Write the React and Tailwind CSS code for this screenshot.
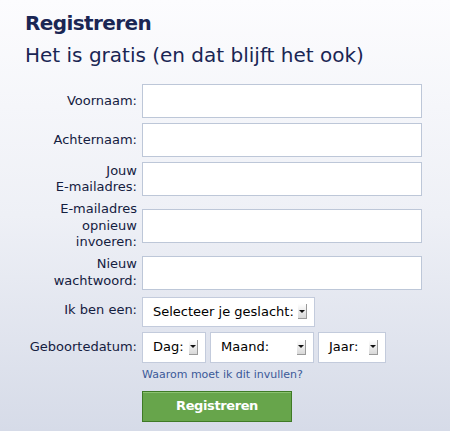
const font = { fontFamily: '"DejaVu Sans", "Lucida Grande", Verdana, sans-serif' };

function Arrow() {
    return (
        <span className="flex h-[15px] w-[9px] items-center justify-center border-r border-b border-[#9a9a9a] bg-gradient-to-b from-[#ffffff] to-[#d8d8d8]">
            <span className="h-0 w-0 border-x-[3px] border-t-[3px] border-x-transparent border-t-[#111]" />
        </span>
    );
}

function Select({ label, width }) {
    return (
        <div className={`flex h-full items-center justify-between border border-[#c3cbdc] bg-white pl-[10px] pr-[7px] ${width}`}>
            <span className="text-[13px] text-black">{label}</span>
            <Arrow />
        </div>
    );
}

function Row({ label, children, height = "h-[34px]" }) {
    return (
        <>
            <label className="flex items-center justify-end text-right text-[13px] leading-[16.5px] text-[#14203f]">
                <span>{label}</span>
            </label>
            <div className={`flex items-center self-center ${height}`}>{children}</div>
        </>
    );
}

function Input() {
    return <div className="h-[34px] w-[280px] border border-[#bdc7d8] bg-white" />;
}

export default function App() {
    return (
        <div
            className="h-[431px] w-[450px] bg-gradient-to-b from-[#fcfcfe] via-[#eef0f6] to-[#d6dbe8] pl-[25px] pt-[11px]"
            style={font}
        >
            <h1 className="text-[20px] leading-[24px] font-bold tracking-[-0.6px] text-[#1a2654]">Registreren</h1>
            <h2 className="mt-[8px] text-[20px] leading-[24px] text-[#1a2654]">Het is gratis (en dat blijft het ook)</h2>

            <div className="mt-[17px] grid grid-cols-[112px_280px] gap-x-[5px] gap-y-[5px]">
                <Row label="Voornaam:"><Input /></Row>
                <Row label="Achternaam:"><Input /></Row>
                <Row label={<>Jouw<br />E-mailadres:</>}><Input /></Row>
                <Row label={<>E-mailadres<br />opnieuw<br />invoeren:</>}><Input /></Row>
                <Row label={<>Nieuw<br />wachtwoord:</>}><Input /></Row>
                <Row label="Ik ben een:" height="h-[30px] mt-[2px]">
                    <Select label="Selecteer je geslacht:" width="w-[173px]" />
                </Row>
                <Row label="Geboortedatum:" height="h-[31px]">
                    <div className="flex h-full gap-[4px]">
                        <Select label="Dag:" width="w-[64px]" />
                        <Select label="Maand:" width="w-[104px]" />
                        <Select label="Jaar:" width="w-[68px]" />
                    </div>
                </Row>
                <div />
                <a href="#" className="mt-0 text-[11px] leading-[14px] text-[#3b5998]">Waarom moet ik dit invullen?</a>
                <div />
                <button className="mt-[4px] h-[31px] w-[150px] border border-[#3f7a26] bg-[#67a54b] text-[13px] font-bold tracking-[-0.4px] text-white shadow-[inset_0_1px_0_#8cc271]">
                    Registreren
                </button>
            </div>
        </div>
    );
}
